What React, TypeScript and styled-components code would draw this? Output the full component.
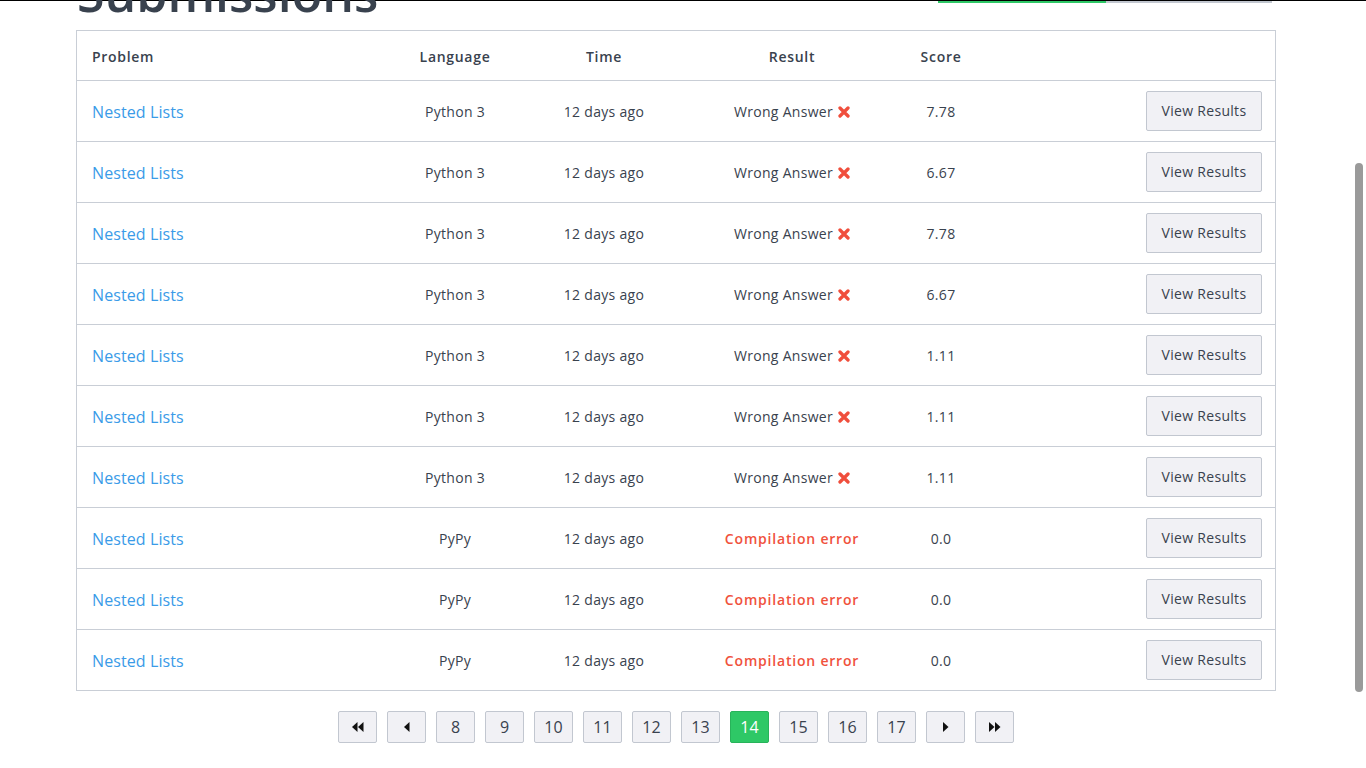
import React, { useLayoutEffect, useRef, useState } from "react";
import styled, { createGlobalStyle } from "styled-components";

const GlobalStyle = createGlobalStyle`
  html, body {
    margin: 0;
    height: 100%;
    overflow: hidden;
    background: #fff;
    font-family: "Open Sans", "Noto Sans", sans-serif;
    color: #39424e;
  }
  * { box-sizing: border-box; }
`;

const Frame = styled.div`
  display: flex;
  height: 100vh;
`;

const Scroller = styled.div`
  flex: 1;
  height: 100%;
  overflow-y: scroll;
  scrollbar-width: none;
  &::-webkit-scrollbar {
    display: none;
  }
`;

const ScrollTrack = styled.div`
  width: 14px;
  height: 100%;
  padding: 0 3px;
  background: #fff;
`;

const ScrollThumb = styled.div`
  width: 8px;
  background: #9a9a9a;
  border-radius: 4px;
`;

const TopLine = styled.div`
  position: fixed;
  top: 0;
  left: 0;
  right: 0;
  height: 1px;
  background: #000;
  z-index: 0;
`;

const NavBar = styled.div`
  height: 64px;
  background: #fff;
`;

const Main = styled.main`
  width: 1200px;
  margin: 0 auto;
  padding: 138px 0 135px;
`;

const TitleRow = styled.div`
  display: flex;
  justify-content: space-between;
  align-items: flex-end;
  margin-bottom: 9px;
`;

const Title = styled.h1`
  position: relative;
  z-index: 1;
  margin: 0 0 0 1px;
  font-size: 50px;
  line-height: 56px;
  font-weight: 600;
  color: #39424e;
`;

const Progress = styled.div`
  position: relative;
  z-index: 1;
  width: 334px;
  height: 2px;
  margin: 0 4px 18px 0;
  background: #c2c7d0;
`;

const ProgressFill = styled.div`
  height: 100%;
  background: #2ec866;
`;

const Table = styled.div`
  border: 1px solid #c9ced6;
`;

const Row = styled.div<{ $head?: boolean }>`
  display: grid;
  grid-template-columns: 303px 150px 148px 228px 70px 1fr;
  align-items: center;
  height: ${(p) => (p.$head ? "50px" : "61px")};
  border-bottom: 1px solid #c9ced6;
  &:last-child {
    border-bottom: none;
    height: 60px;
  }
`;

const HeadCell = styled.div<{ $left?: boolean }>`
  font-size: 14px;
  font-weight: 600;
  letter-spacing: 0.7px;
  color: #39424e;
  text-align: ${(p) => (p.$left ? "left" : "center")};
  padding-left: ${(p) => (p.$left ? "15px" : "0")};
  padding-top: 2px;
`;

const Cell = styled.div`
  font-size: 14px;
  letter-spacing: 0.3px;
  color: #39424e;
  text-align: center;
  display: flex;
  justify-content: center;
  align-items: center;
  gap: 5px;
`;

const ProblemLink = styled.a`
  padding-left: 15px;
  font-size: 16px;
  letter-spacing: 0.1px;
  color: #3a9be8;
  text-decoration: none;
  padding-top: 2px;
`;

const WrongIcon = styled.svg`
  width: 12px;
  height: 12px;
  margin-top: 1px;
`;

const ErrorText = styled.span`
  font-size: 14px;
  font-weight: 600;
  letter-spacing: 0.8px;
  color: #f0523d;
`;

const ActionCell = styled.div`
  display: flex;
  justify-content: flex-end;
  padding-right: 13px;
  padding-bottom: 1px;
`;

const Button = styled.button`
  width: 116px;
  height: 40px;
  background: #f1f1f5;
  border: 1px solid #c2c7d0;
  border-radius: 2px;
  font-family: "Open Sans", sans-serif;
  font-size: 14px;
  letter-spacing: 0.3px;
  color: #39424e;
  cursor: pointer;
`;

const Pager = styled.div`
  display: flex;
  justify-content: center;
  gap: 10px;
  margin-top: 20px;
`;

const PageButton = styled.button<{ $active?: boolean }>`
  width: 39px;
  height: 32px;
  display: flex;
  align-items: center;
  justify-content: center;
  padding: 0;
  border-radius: 2px;
  font-family: "Open Sans", sans-serif;
  font-size: 16px;
  color: ${(p) => (p.$active ? "#fff" : "#39424e")};
  background: ${(p) => (p.$active ? "#2ec866" : "#f1f1f5")};
  border: 1px solid ${(p) => (p.$active ? "#28b35a" : "#c2c7d0")};
  cursor: pointer;
`;

const Cross = () => (
  <WrongIcon viewBox="0 0 12 12">
    <path d="M2 2 L10 10 M10 2 L2 10" stroke="#f04e3c" strokeWidth="3.3" strokeLinecap="round" />
  </WrongIcon>
);

const Arrow = ({ dir, double }: { dir: "left" | "right"; double?: boolean }) => {
  const one = dir === "left" ? "5.5,0 5.5,10 0,5" : "0,0 5.5,5 0,10";
  return (
    <svg width={double ? 12 : 6} height="10" viewBox={`0 0 ${double ? 12 : 6} 10`}>
      <polygon points={one} fill="#111" />
      {double && <polygon points={one} fill="#111" transform="translate(6 0)" />}
    </svg>
  );
};

type Sub = { lang: string; result: "wrong" | "compile"; score: string };

const subs: Sub[] = [
  { lang: "Python 3", result: "wrong", score: "7.78" },
  { lang: "Python 3", result: "wrong", score: "6.67" },
  { lang: "Python 3", result: "wrong", score: "7.78" },
  { lang: "Python 3", result: "wrong", score: "6.67" },
  { lang: "Python 3", result: "wrong", score: "1.11" },
  { lang: "Python 3", result: "wrong", score: "1.11" },
  { lang: "Python 3", result: "wrong", score: "1.11" },
  { lang: "PyPy", result: "compile", score: "0.0" },
  { lang: "PyPy", result: "compile", score: "0.0" },
  { lang: "PyPy", result: "compile", score: "0.0" },
];

const pages = [8, 9, 10, 11, 12, 13, 14, 15, 16, 17];

const App = () => {
  const scrollRef = useRef<HTMLDivElement>(null);
  const tableRef = useRef<HTMLDivElement>(null);
  const [thumb, setThumb] = useState({ top: 0, size: 0 });

  const measure = () => {
    const el = scrollRef.current;
    if (!el) return;
    const track = el.clientHeight;
    setThumb({
      top: (el.scrollTop / el.scrollHeight) * track,
      size: (el.clientHeight / el.scrollHeight) * track,
    });
  };

  useLayoutEffect(() => {
    if (scrollRef.current && tableRef.current) {
      scrollRef.current.scrollTop = tableRef.current.offsetTop - 30;
    }
    measure();
  }, []);

  return (
    <>
      <GlobalStyle />
      <Frame>
        <Scroller ref={scrollRef} onScroll={measure}>
          <TopLine />
          <NavBar />
          <Main>
            <TitleRow>
              <Title>Submissions</Title>
              <Progress>
                <ProgressFill style={{ width: "50.3%" }} />
              </Progress>
            </TitleRow>
            <Table ref={tableRef}>
              <Row $head>
                <HeadCell $left>Problem</HeadCell>
                <HeadCell>Language</HeadCell>
                <HeadCell>Time</HeadCell>
                <HeadCell>Result</HeadCell>
                <HeadCell>Score</HeadCell>
                <HeadCell />
              </Row>
              {subs.map((s, i) => (
                <Row key={i}>
                  <ProblemLink href="#">Nested Lists</ProblemLink>
                  <Cell>{s.lang}</Cell>
                  <Cell>12 days ago</Cell>
                  <Cell>
                    {s.result === "wrong" ? (
                      <>
                        Wrong Answer
                        <Cross />
                      </>
                    ) : (
                      <ErrorText>Compilation error</ErrorText>
                    )}
                  </Cell>
                  <Cell>{s.score}</Cell>
                  <ActionCell>
                    <Button>View Results</Button>
                  </ActionCell>
                </Row>
              ))}
            </Table>
            <Pager>
              <PageButton>
                <Arrow dir="left" double />
              </PageButton>
              <PageButton>
                <Arrow dir="left" />
              </PageButton>
              {pages.map((p) => (
                <PageButton key={p} $active={p === 14}>
                  {p}
                </PageButton>
              ))}
              <PageButton>
                <Arrow dir="right" />
              </PageButton>
              <PageButton>
                <Arrow dir="right" double />
              </PageButton>
            </Pager>
          </Main>
        </Scroller>
        <ScrollTrack>
          <ScrollThumb style={{ marginTop: thumb.top, height: thumb.size }} />
        </ScrollTrack>
      </Frame>
    </>
  );
};

export default App;
